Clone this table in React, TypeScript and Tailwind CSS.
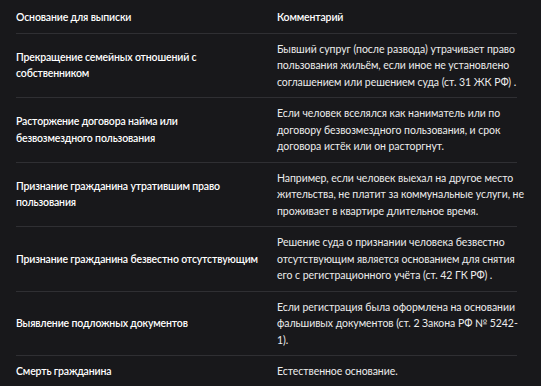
import React from "react";

type Row = { reason: string[]; comment: string[] };

// строки разбиты так же, как в исходной таблице
const rows: Row[] = [
  {
    reason: ["Прекращение семейных отношений с", "собственником"],
    comment: [
      "Бывший супруг (после развода) утрачивает право",
      "пользования жильём, если иное не установлено",
      "соглашением или решением суда (ст. 31 ЖК РФ) .",
    ],
  },
  {
    reason: ["Расторжение договора найма или", "безвозмездного пользования"],
    comment: [
      "Если человек вселялся как наниматель или по",
      "договору безвозмездного пользования, и срок",
      "договора истёк или он расторгнут.",
    ],
  },
  {
    reason: ["Признание гражданина утратившим право", "пользования"],
    comment: [
      "Например, если человек выехал на другое место",
      "жительства, не платит за коммунальные услуги, не",
      "проживает в квартире длительное время.",
    ],
  },
  {
    reason: ["Признание гражданина безвестно отсутствующим"],
    comment: [
      "Решение суда о признании человека безвестно",
      "отсутствующим является основанием для снятия",
      "его с регистрационного учёта (ст. 42 ГК РФ) .",
    ],
  },
  {
    reason: ["Выявление подложных документов"],
    comment: [
      "Если регистрация была оформлена на основании",
      "фальшивых документов (ст. 2 Закона РФ № 5242-",
      "1).",
    ],
  },
  {
    reason: ["Смерть гражданина"],
    comment: ["Естественное основание."],
  },
];

function Lines({ lines }: { lines: string[] }) {
  return (
    <>
      {lines.map((line) => (
        <span key={line} className="block whitespace-nowrap">
          {line}
        </span>
      ))}
    </>
  );
}

export default function App() {
  return (
    <div
      className="w-[541px] h-[386px] overflow-hidden bg-[#18181b] pl-4 pt-[2px] leading-[16.5px] text-[#ececec]"
      style={{ fontFamily: '"Lato", "Noto Sans", sans-serif' }}
    >
      <div className="w-[501px]">
        <div className="grid grid-cols-[253px_248px] border-b border-[#2f2f33]">
          <div className="py-[7px] pr-2 text-[10.5px] font-semibold tracking-[-0.15px] text-white">
            Основание для выписки
          </div>
          <div className="py-[7px] pl-2 text-[10.5px] font-semibold tracking-[-0.15px] text-white">
            Комментарий
          </div>
        </div>
        {rows.map((row) => (
          <div
            key={row.reason[0]}
            className="grid grid-cols-[253px_248px] border-b border-[#2f2f33]"
          >
            <div className="flex flex-col justify-center py-[7px] pr-2 text-[10.5px] font-semibold tracking-[-0.15px] text-white">
              <Lines lines={row.reason} />
            </div>
            <div className="py-[7px] pl-2 text-[10.5px] tracking-[-0.05px]">
              <Lines lines={row.comment} />
            </div>
          </div>
        ))}
      </div>
    </div>
  );
}
